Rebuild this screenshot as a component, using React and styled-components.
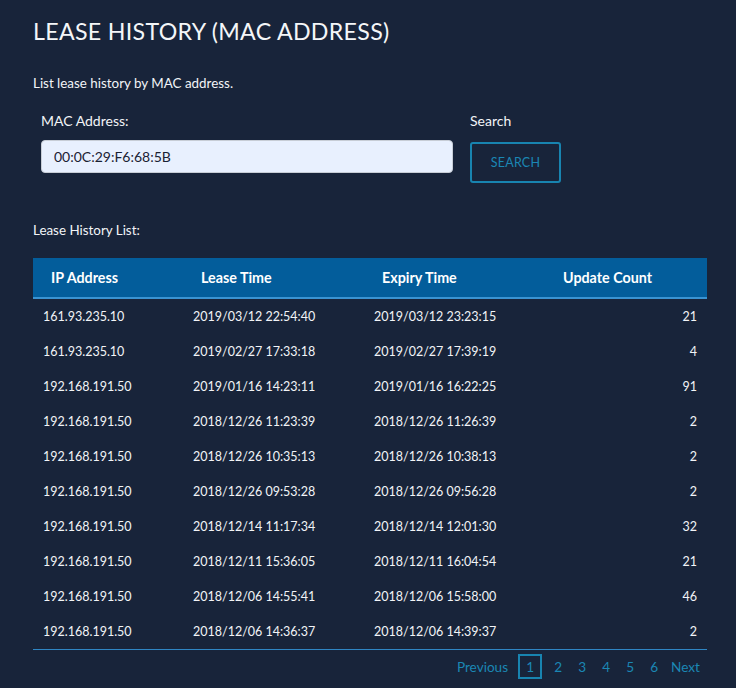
import React from "react";
import styled, { createGlobalStyle } from "styled-components";

const GlobalStyle = createGlobalStyle`
  html, body {
    margin: 0;
    padding: 0;
    background: #18243a;
  }
  body {
    font-family: Lato, "Open Sans", sans-serif;
    color: #f2f4f7;
  }
`;

const Page = styled.div`
  width: 736px;
  min-height: 688px;
  padding: 16px 29px 0 33px;
  box-sizing: border-box;
  background: #18243a;
`;

const Title = styled.h1`
  margin: 0;
  font-size: 23.2px;
  font-weight: 400;
  letter-spacing: 0.3px;
  line-height: 30px;
  color: #f4f6f8;
`;

const Text = styled.p`
  margin: ${(p) => p.$margin || "0"};
  font-size: 13.4px;
  line-height: 16px;
  color: #f2f4f7;
`;

const Form = styled.div`
  display: flex;
  gap: 17px;
  padding-left: 8px;
  margin-top: 21px;
`;

const Field = styled.div`
  display: flex;
  flex-direction: column;
  width: ${(p) => p.$width || "auto"};
`;

const Label = styled.label`
  font-size: 14px;
  line-height: 18px;
  height: 18px;
  margin-bottom: ${(p) => p.$gap || "10px"};
  color: #f2f4f7;
`;

const Input = styled.input`
  height: 33px;
  box-sizing: border-box;
  border: 1px solid #c7cdd6;
  border-radius: 4px;
  background: #e8f0fe;
  padding: 0 12px;
  font-family: inherit;
  font-size: 14px;
  color: #1a2233;
  outline: none;
`;

const Button = styled.button`
  width: 91px;
  height: 41px;
  box-sizing: border-box;
  border: 2px solid #1884b0;
  border-radius: 3px;
  background: transparent;
  color: #1b87b4;
  font-family: inherit;
  font-size: 12.5px;
  letter-spacing: 0.2px;
  cursor: pointer;
`;

const Table = styled.table`
  width: 674px;
  table-layout: fixed;
  border-collapse: collapse;
  margin-top: 20px;
  border-bottom: 1px solid #2f86c4;
`;

const Th = styled.th`
  box-sizing: border-box;
  background: #035d9b;
  height: 40px;
  padding: 0 0 0 18px;
  text-align: left;
  font-size: 14.3px;
  font-weight: 700;
  color: #ffffff;
  border-bottom: 2px solid #3a93d2;
  width: ${(p) => p.$w || "auto"};
`;

const Td = styled.td`
  height: 35px;
  padding: 0 10px;
  font-size: 12.5px;
  color: #f2f4f7;
  white-space: nowrap;
  text-align: ${(p) => (p.$right ? "right" : "left")};
`;

const Pager = styled.div`
  display: flex;
  justify-content: flex-end;
  align-items: center;
  padding-right: 2px;
  margin-top: 4px;
`;

const PageLink = styled.span`
  display: inline-flex;
  align-items: center;
  justify-content: center;
  box-sizing: border-box;
  height: 25px;
  min-width: 24px;
  padding: 0 ${(p) => p.$pad || "0"};
  margin: ${(p) => (p.$active ? "0 4px 0 0" : "0")};
  border: ${(p) => (p.$active ? "2px solid #1884b0" : "none")};
  font-size: 13.6px;
  color: #1b87b4;
`;

const rows = [
  ["161.93.235.10", "2019/03/12 22:54:40", "2019/03/12 23:23:15", "21"],
  ["161.93.235.10", "2019/02/27 17:33:18", "2019/02/27 17:39:19", "4"],
  ["192.168.191.50", "2019/01/16 14:23:11", "2019/01/16 16:22:25", "91"],
  ["192.168.191.50", "2018/12/26 11:23:39", "2018/12/26 11:26:39", "2"],
  ["192.168.191.50", "2018/12/26 10:35:13", "2018/12/26 10:38:13", "2"],
  ["192.168.191.50", "2018/12/26 09:53:28", "2018/12/26 09:56:28", "2"],
  ["192.168.191.50", "2018/12/14 11:17:34", "2018/12/14 12:01:30", "32"],
  ["192.168.191.50", "2018/12/11 15:36:05", "2018/12/11 16:04:54", "21"],
  ["192.168.191.50", "2018/12/06 14:55:41", "2018/12/06 15:58:00", "46"],
  ["192.168.191.50", "2018/12/06 14:36:37", "2018/12/06 14:39:37", "2"],
];

export default function App() {
  return (
    <Page>
      <GlobalStyle />
      <Title>LEASE HISTORY (MAC ADDRESS)</Title>
      <Text $margin="29px 0 0">List lease history by MAC address.</Text>
      <Form>
        <Field $width="412px">
          <Label>MAC Address:</Label>
          <Input defaultValue="00:0C:29:F6:68:5B" />
        </Field>
        <Field>
          <Label $gap="12px">Search</Label>
          <Button>SEARCH</Button>
        </Field>
      </Form>
      <Text $margin="39px 0 0">Lease History List:</Text>
      <Table>
        <thead>
          <tr>
            <Th $w="150px">IP Address</Th>
            <Th $w="181px">Lease Time</Th>
            <Th $w="181px">Expiry Time</Th>
            <Th>Update Count</Th>
          </tr>
        </thead>
        <tbody>
          {rows.map((r, i) => (
            <tr key={i}>
              <Td>{r[0]}</Td>
              <Td>{r[1]}</Td>
              <Td>{r[2]}</Td>
              <Td $right>{r[3]}</Td>
            </tr>
          ))}
        </tbody>
      </Table>
      <Pager>
        <PageLink $pad="10px 0 0">Previous</PageLink>
        <PageLink $active>1</PageLink>
        <PageLink>2</PageLink>
        <PageLink>3</PageLink>
        <PageLink>4</PageLink>
        <PageLink>5</PageLink>
        <PageLink>6</PageLink>
        <PageLink $pad="5px">Next</PageLink>
      </Pager>
    </Page>
  );
}
